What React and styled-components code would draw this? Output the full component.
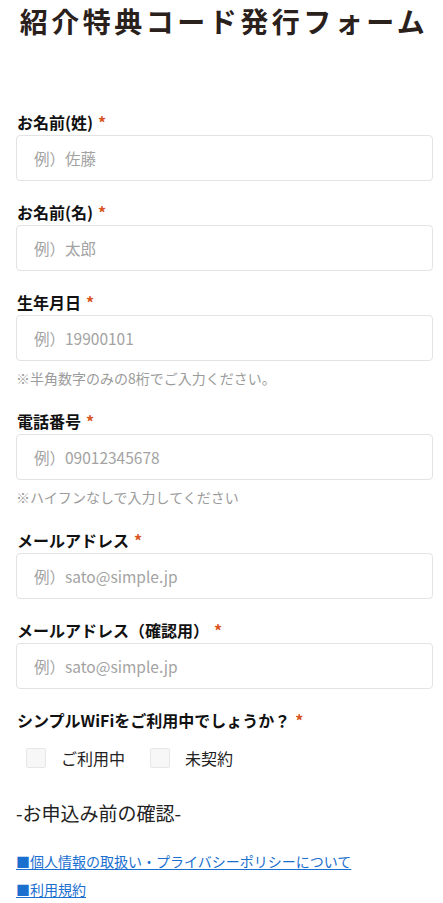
import React from "react";
import styled, { createGlobalStyle } from "styled-components";

const Global = createGlobalStyle`
  html, body { margin: 0; padding: 0; background: #fff; }
  body { font-family: "Noto Sans CJK JP", "Noto Sans", sans-serif; color: #222; }
  * { box-sizing: border-box; }
`;

const Page = styled.div`
  width: 443px;
  padding: 0 10px 0 16px;
`;

const Title = styled.h1`
  margin: 0 0 69px;
  font-size: 28px;
  line-height: 42px;
  font-weight: 700;
  letter-spacing: 3.5px;
  color: #2b211c;
  text-align: center;
  white-space: nowrap;
  margin-left: -1px;
`;

const Field = styled.div`
  display: flex;
  flex-direction: column;
  margin-bottom: ${(p) => (p.$help ? "22px" : "20px")};
`;

const Label = styled.label`
  font-size: 16px;
  font-weight: 700;
  line-height: 22px;
  margin-bottom: 2px;
  color: #111;
  padding-left: 1px;
`;

const Req = styled.span`
  color: #d9541e;
  margin-left: 5px;
`;

const Input = styled.input`
  width: 417px;
  height: 46px;
  border: 1px solid #e3e3e3;
  border-radius: 4px;
  padding: 0 17px;
  font-family: inherit;
  font-size: 15.5px;
  color: #222;
  background: #fff;
  outline: none;
  &::placeholder { color: #a3a3a3; }
`;

const Help = styled.div`
  margin-top: 7px;
  font-size: 14px;
  line-height: 20px;
  color: #9b9b9b;
`;

const Options = styled.div`
  display: flex;
  align-items: center;
  gap: 25px;
  padding-left: 10px;
  margin-top: 13px;
`;

const Option = styled.label`
  display: flex;
  align-items: center;
  gap: 15px;
  font-size: 16px;
  line-height: 24px;
  color: #222;
`;

const Box = styled.span`
  width: 20px;
  height: 20px;
  background: #f7f7f7;
  border: 1px solid #e6e6e6;
  border-radius: 2px;
`;

const SubHeading = styled.h2`
  margin: 29px 0 0;
  font-size: 19px;
  line-height: 28px;
  font-weight: 400;
  color: #222;
`;

const Links = styled.div`
  display: flex;
  flex-direction: column;
  margin-top: 20px;
`;

const Link = styled.a`
  font-size: 14px;
  line-height: 28px;
  color: #1a6fcf;
  text-decoration: underline;
  text-underline-offset: 2px;
  align-self: flex-start;
`;

const fields = [
  { label: "お名前(姓)", ph: "例）佐藤" },
  { label: "お名前(名)", ph: "例）太郎" },
  { label: "生年月日", ph: "例）19900101", help: "※半角数字のみの8桁でご入力ください。" },
  { label: "電話番号", ph: "例）09012345678", help: "※ハイフンなしで入力してください" },
  { label: "メールアドレス", ph: "例）sato@simple.jp" },
  { label: "メールアドレス（確認用）", ph: "例）sato@simple.jp" },
];

export default function App() {
  return (
    <Page>
      <Global />
      <Title>紹介特典コード発行フォーム</Title>
      {fields.map((f) => (
        <Field key={f.label} $help={!!f.help}>
          <Label>
            {f.label}
            <Req>*</Req>
          </Label>
          <Input placeholder={f.ph} />
          {f.help && <Help>{f.help}</Help>}
        </Field>
      ))}
      <Field>
        <Label>
          シンプルWiFiをご利用中でしょうか？
          <Req>*</Req>
        </Label>
        <Options>
          <Option>
            <Box />
            ご利用中
          </Option>
          <Option>
            <Box />
            未契約
          </Option>
        </Options>
      </Field>
      <SubHeading>-お申込み前の確認-</SubHeading>
      <Links>
        <Link href="#">■個人情報の取扱い・プライバシーポリシーについて</Link>
        <Link href="#">■利用規約</Link>
      </Links>
    </Page>
  );
}
